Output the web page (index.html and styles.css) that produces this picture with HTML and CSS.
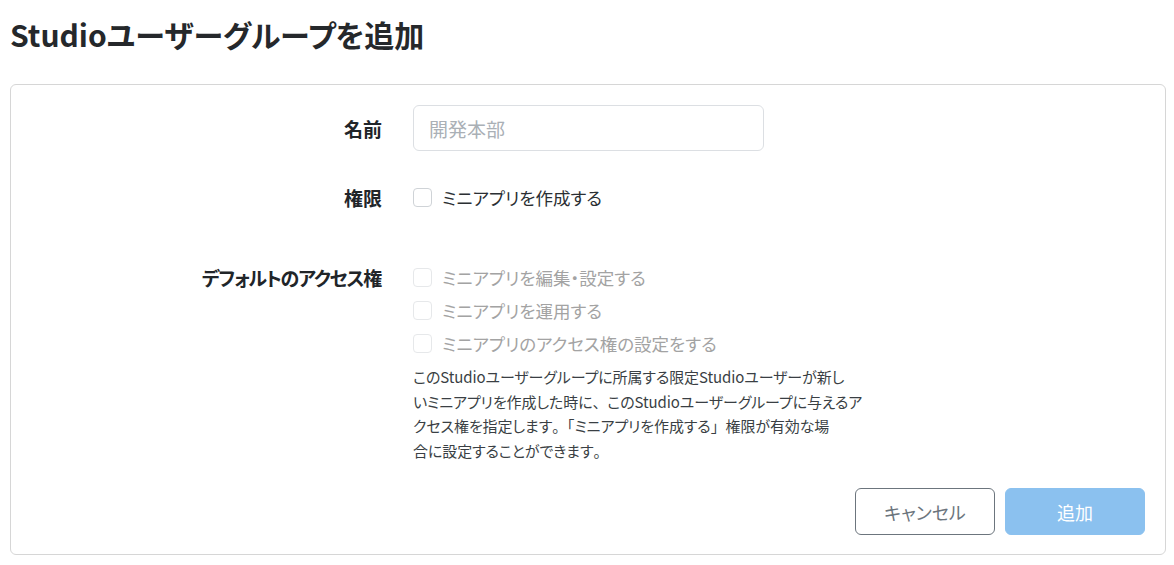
FILE: index.html
```html
<!DOCTYPE html>
<html lang="ja">
<head>
<meta charset="utf-8">
<title>Studioユーザーグループを追加</title>
<link rel="stylesheet" href="styles.css">
</head>
<body>
<div class="page">
  <h1 class="title">Studioユーザーグループを追加</h1>
  <form class="card">
    <div class="row row-name">
      <label class="label" for="name">名前</label>
      <div class="field">
        <input id="name" class="text-input" type="text" placeholder="開発本部">
      </div>
    </div>
    <div class="row row-perm">
      <div class="label">権限</div>
      <div class="field">
        <label class="check"><span class="box"></span><span>ミニアプリを作成する</span></label>
      </div>
    </div>
    <div class="row row-access">
      <div class="label label-long">デフォルトのアクセス権</div>
      <div class="field">
        <label class="check disabled"><span class="box"></span><span>ミニアプリを編集・設定する</span></label>
        <label class="check disabled"><span class="box"></span><span>ミニアプリを運用する</span></label>
        <label class="check disabled"><span class="box"></span><span>ミニアプリのアクセス権の設定をする</span></label>
        <p class="help">このStudioユーザーグループに所属する限定Studioユーザーが新し<br>いミニアプリを作成した時に<span class="punct">、</span>このStudioユーザーグループに与えるア<br>クセス権を指定します<span class="punct">。「</span>ミニアプリを作成する<span class="punct">」</span>権限が有効な場<br>合に設定することができます<span class="punct">。</span></p>
      </div>
    </div>
    <div class="actions">
      <button type="button" class="btn btn-cancel">キャンセル</button>
      <button type="button" class="btn btn-add">追加</button>
    </div>
  </form>
</div>
</body>
</html>
```

FILE: styles.css
```css
* { box-sizing: border-box; }
html, body { margin: 0; padding: 0; background: #fff; }
body {
  font-family: "Noto Sans CJK JP", "Noto Sans", sans-serif;
  font-feature-settings: "palt";
  color: #212529;
}
.page { padding: 0 8px 0 10px; }
.title {
  margin: 0;
  padding-top: 14px;
  font-size: 30px;
  line-height: 40px;
  font-weight: 700;
  color: #25282b;
}
.card {
  margin-top: 30px;
  border: 1px solid #d6d6d6;
  border-radius: 6px;
  padding: 20px 20px 19px 0;
}
.row {
  display: grid;
  grid-template-columns: 371px 1fr;
  column-gap: 31px;
}
.label {
  text-align: right;
  font-size: 19px;
  font-weight: 700;
  color: #212529;
}
.label-long { letter-spacing: -1.2px; padding-right: 1px; }
.row-name .label { line-height: 44px; padding-top: 2px; }
.row-perm { margin-top: 34px; }
.row-perm .label { line-height: 25px; }
.row-access { margin-top: 51px; }
.row-access .label { line-height: 33px; }
.text-input {
  width: 351px;
  height: 46px;
  border: 1px solid #dcdfe3;
  border-radius: 6px;
  padding: 0 15px;
  font-family: inherit;
  font-feature-settings: "palt";
  font-size: 19px;
  color: #212529;
  outline: none;
}
.text-input::placeholder { color: #aab0b6; }
.check {
  display: flex;
  align-items: center;
  gap: 10px;
  font-size: 17.5px;
  color: #2b2f33;
}
.row-perm .check { height: 25px; }
.row-access .check { height: 33px; color: #a3a3a3; }
.box {
  width: 19px;
  height: 19px;
  border: 1px solid #cfd3d7;
  border-radius: 4px;
  background: #fff;
  flex: none;
}
.check.disabled .box { border-color: #e6e8ea; }
.help {
  margin: 5px 0 0;
  font-size: 15px;
  line-height: 24.5px;
  letter-spacing: -0.1px;
  color: #3a3f44;
}
.punct { font-feature-settings: normal; }
.actions {
  display: flex;
  justify-content: flex-end;
  gap: 10px;
  margin-top: 25px;
}
.btn {
  width: 140px;
  height: 47px;
  border-radius: 6px;
  font-family: inherit;
  font-feature-settings: "palt";
  font-size: 18px;
  cursor: pointer;
}
.btn-cancel {
  background: #fff;
  border: 1px solid #6c757d;
  color: #6c757d;
}
.btn-add {
  background: #8bc1ef;
  border: 1px solid #8bc1ef;
  color: #fff;
}
```
